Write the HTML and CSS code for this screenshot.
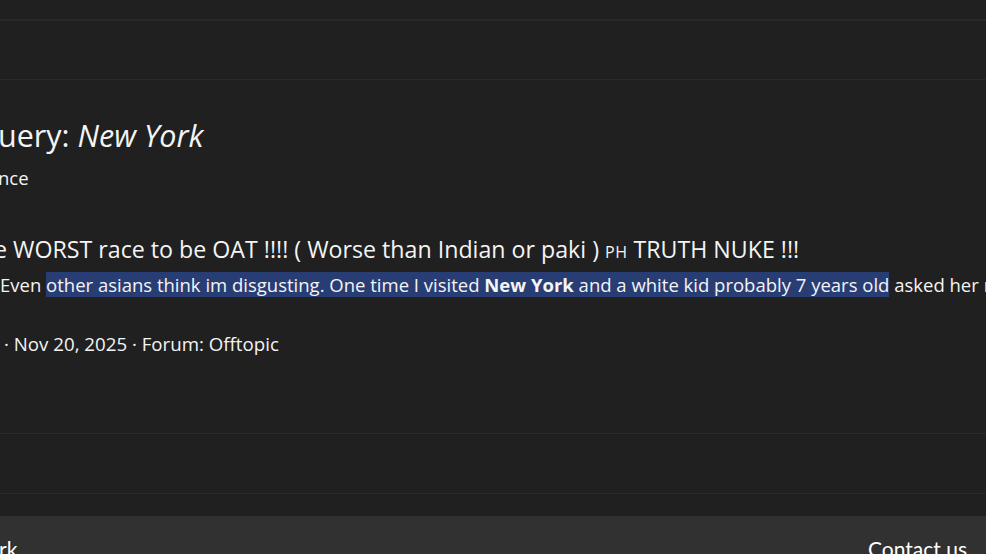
FILE: index.html
```html
<!DOCTYPE html>
<html lang="en">
<head>
<meta charset="utf-8">
<title>Search results for query: New York</title>
<link rel="stylesheet" href="styles.css">
</head>
<body>
<div class="page">
  <div class="topbar"></div>
  <div class="navbar"></div>
  <main class="main">
    <h1 class="title">uery: <em>New York</em></h1>
    <div class="subtitle">nce</div>
    <div class="result">
      <h3 class="result-title">e WORST race to be OAT !!!! ( Worse than Indian or paki ) <span class="sc">PH</span> TRUTH NUKE !!!</h3>
      <div class="snippet">Even <mark>other asians think im disgusting. One time I visited <b>New York</b> and a white kid probably 7 years old</mark> asked her mom</div>
      <div class="meta">· Nov 20, 2025 · Forum: Offtopic</div>
    </div>
  </main>
  <div class="band"></div>
  <div class="gap"></div>
  <footer class="footer">
    <span class="foot-left">rk</span>
    <span class="foot-right">Contact us</span>
  </footer>
</div>
</body>
</html>
```
FILE: styles.css
```css
html, body {
  margin: 0;
  padding: 0;
  background: #202020;
  overflow: hidden;
}
body {
  font-family: "Open Sans", "Noto Sans", sans-serif;
  color: #f4f4f4;
  width: 986px;
  height: 554px;
}
.page {
  display: flex;
  flex-direction: column;
  height: 554px;
}
.topbar {
  height: 19px;
  border-bottom: 2px solid #292929;
  flex: none;
}
.navbar {
  height: 58px;
  border-bottom: 1px solid #2a2a2a;
  flex: none;
}
.main {
  height: 354px;
  border-bottom: 1px solid #2a2a2a;
  flex: none;
  padding-top: 35px;
  box-sizing: border-box;
  white-space: nowrap;
}
.title {
  margin: 0 0 0 -2px;
  font-size: 30.5px;
  font-weight: 400;
  line-height: 40px;
}
.title em {
  font-style: italic;
}
.subtitle {
  margin-top: 11px;
  margin-left: -2px;
  font-size: 18.5px;
  line-height: 24px;
}
.result {
  margin-top: 44px;
}
.result-title {
  margin: 0 0 0 -6px;
  font-size: 23.2px;
  font-weight: 400;
  line-height: 30px;
}
.sc {
  font-size: 16px;
  letter-spacing: 0.5px;
}
.snippet {
  margin-top: 5px;
  font-size: 18.5px;
  line-height: 26px;
}
.snippet mark {
  background: #283d74;
  color: #f4f4f4;
}
.snippet b {
  font-weight: 700;
}
.meta {
  margin-top: 33px;
  margin-left: 4px;
  font-size: 18.7px;
  line-height: 26px;
}
.band {
  height: 59px;
  border-bottom: 1px solid #2a2a2a;
  flex: none;
}
.gap {
  height: 22px;
  flex: none;
}
.footer {
  flex: 1;
  background: #313131;
  display: flex;
  justify-content: space-between;
  align-items: flex-start;
  padding: 20px 19px 0 0;
  font-family: "Lato", sans-serif;
  font-size: 21px;
  line-height: 26px;
  color: #ffffff;
}
.foot-left {
  margin-left: -1px;
}
```
